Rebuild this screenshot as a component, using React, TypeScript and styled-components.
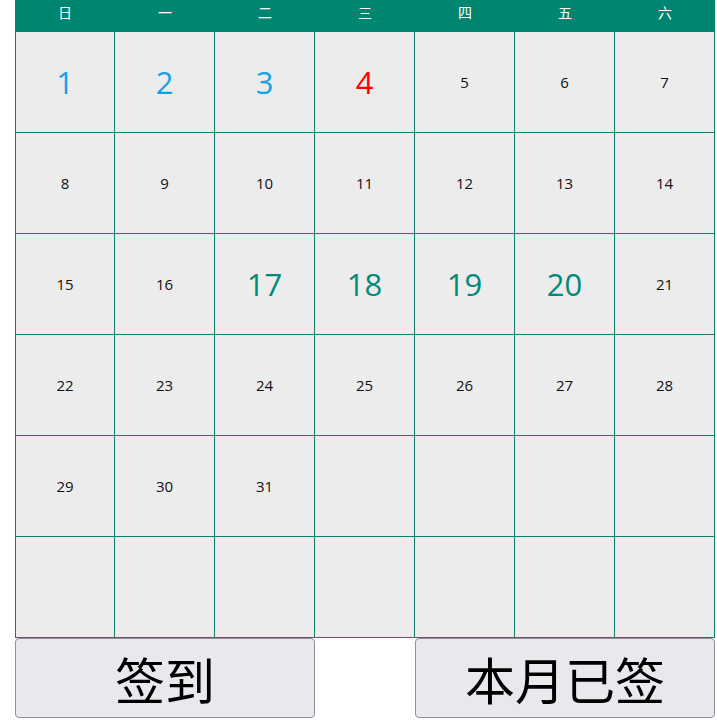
import React from "react"
import styled, { createGlobalStyle } from "styled-components"

const GlobalStyle = createGlobalStyle`
  body {
    margin: 0;
    background: #ffffff;
    font-family: "Noto Sans CJK SC", "Open Sans", sans-serif;
  }
`

const Page = styled.div`
  width: 700px;
  margin-left: 15px;
`

const Header = styled.div`
  display: grid;
  grid-template-columns: repeat(7, 100px);
  height: 32px;
  background: #008571;
`

const WeekDay = styled.div`
  display: flex;
  align-items: center;
  justify-content: center;
  color: #ffffff;
  font-size: 14px;
  padding-bottom: 9px;
`

const Grid = styled.div`
  display: grid;
  grid-template-columns: 99px repeat(6, 100px);
  border-left: 1px solid #0b7f6c;
`

const Cell = styled.div`
  height: 100px;
  display: flex;
  align-items: center;
  justify-content: center;
  background: #ececec;
  border-right: 1px solid #0b7f6c;
  border-bottom: 1px solid #0b7f6c;
`

type Mark = "none" | "past" | "today" | "signed"

const markColor: Record<Mark, string> = {
  none: "#111111",
  past: "#17a1e6",
  today: "#ff0000",
  signed: "#008a78",
}

const Day = styled.span<{ $mark: Mark }>`
  color: ${(p) => markColor[p.$mark]};
  font-size: ${(p) => (p.$mark === "none" ? "15px" : "31px")};
  font-family: "Open Sans", "Noto Sans CJK SC", sans-serif;
`

const Actions = styled.div`
  display: flex;
  justify-content: space-between;
`

const Button = styled.button`
  width: 300px;
  height: 80px;
  background: #e9e9ed;
  border: 1px solid #8f8f9d;
  border-radius: 4px;
  font-family: "Noto Sans CJK SC", sans-serif;
  font-size: 50px;
  color: #000000;
  padding: 0;
  line-height: 1;
`

const weekDays = ["日", "一", "二", "三", "四", "五", "六"]

const markFor = (day: number): Mark => {
  if (day >= 1 && day <= 3) return "past"
  if (day === 4) return "today"
  if (day >= 17 && day <= 20) return "signed"
  return "none"
}

const App = () => {
  const cells = Array.from({ length: 42 }, (_, i) => (i < 31 ? i + 1 : 0))

  return (
    <Page>
      <GlobalStyle />
      <Header>
        {weekDays.map((d) => (
          <WeekDay key={d}>{d}</WeekDay>
        ))}
      </Header>
      <Grid>
        {cells.map((day, i) => (
          <Cell key={i}>
            {day > 0 && <Day $mark={markFor(day)}>{day}</Day>}
          </Cell>
        ))}
      </Grid>
      <Actions>
        <Button>签到</Button>
        <Button>本月已签</Button>
      </Actions>
    </Page>
  )
}

export default App
